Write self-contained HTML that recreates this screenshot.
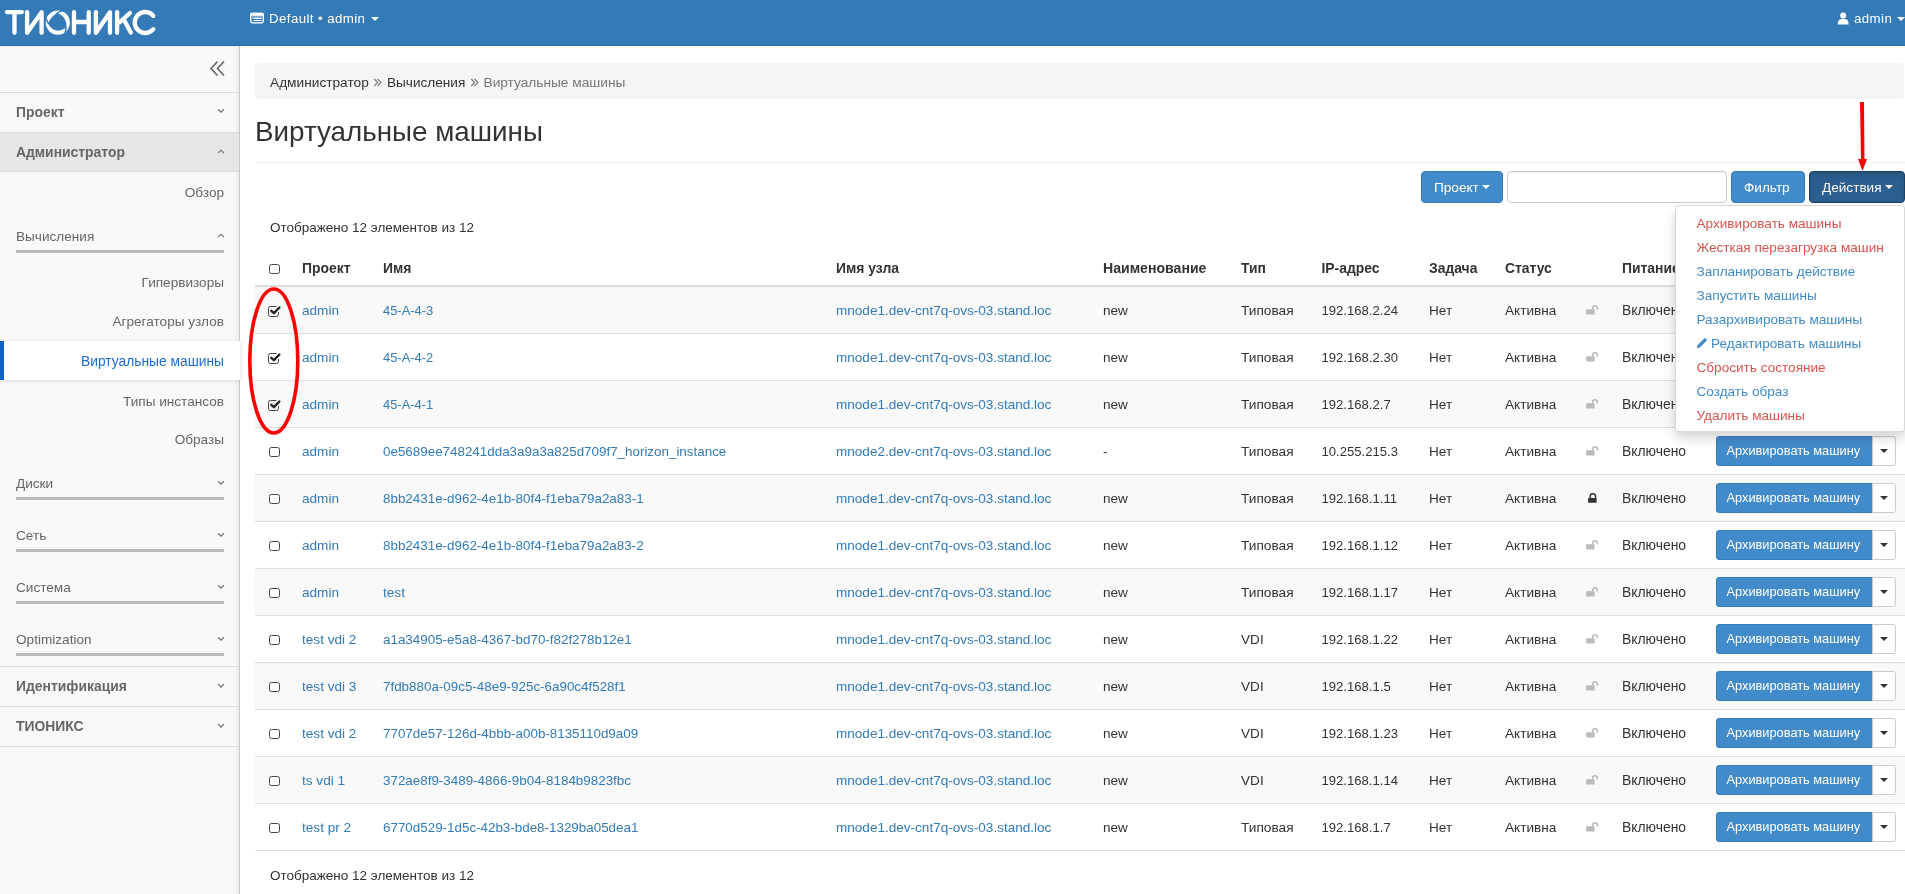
<!DOCTYPE html>
<html><head><meta charset="utf-8"><title>Виртуальные машины</title>
<style>
html,body{margin:0;padding:0;}
body{width:1905px;height:894px;overflow:hidden;position:relative;background:#fff;font-family:"Liberation Sans", sans-serif;}
#wrap{position:absolute;left:0;top:0;width:1905px;height:894px;will-change:transform;}
.t{position:absolute;white-space:nowrap;line-height:20px;}
</style></head><body><div id="wrap">
<div style="position:absolute;left:0px;top:0px;width:1905px;height:45px;background:#337ab7;"></div>
<div style="position:absolute;left:0px;top:45px;width:1905px;height:1px;background:#2e6da4;"></div>
<svg style="position:absolute;left:0;top:0" width="170" height="46" viewBox="0 0 170 46">
<g fill="none" stroke="#fff" stroke-width="4.3" stroke-linecap="round" stroke-linejoin="round">
<path d="M6.95 12.05 H21.85 M14.5 12.05 V32.75"/>
<path d="M27.1 12.2 V32.8 L41.6 12.2 V32.8"/>
<path d="M74 12.2 V32.8 M88.7 12.2 V32.8 M74 22 H88.7"/>
<path d="M95.9 12.2 V32.8 L110 12.2 V32.8"/>
<path d="M117.1 12.2 V32.8 M117.1 22.3 L119.5 22.3 L130 13 M123.8 19.5 L130.8 32.5"/>
<path d="M153.3 15.8 A10.5 10.5 0 1 0 153.3 29.2"/>
</g>
<circle cx="57.8" cy="22.6" r="12.1" fill="#fff"/>
<path d="M56.93 12.64 Q67.40 16.48 66.46 27.60 Q54.99 35.28 47.84 23.47 Q50.96 16.86 56.93 12.64 Z" fill="#337ab7"/>
<path d="M56.97 13.14 L62.18 10.57 M66.03 27.35 L65.14 33.09 M48.34 23.43 L45.77 18.22 " stroke="#337ab7" stroke-width="1.4" fill="none"/>
</svg>
<svg style="position:absolute;left:250px;top:12px" width="14" height="12" viewBox="0 0 14 12">
<rect x="0.6" y="1.3" width="12.8" height="9.6" rx="1.6" fill="rgba(255,255,255,0.35)" stroke="#fff" stroke-width="1.1"/>
<rect x="0.6" y="0.8" width="12.8" height="3" rx="1.2" fill="#fff"/>
<rect x="3.8" y="5.9" width="7.6" height="1.1" fill="#fff"/><rect x="3.8" y="7.9" width="7.6" height="1.1" fill="#fff"/>
<rect x="2" y="7" width="10" height="0.9" fill="#2f6fae"/><rect x="2" y="9" width="10" height="0.9" fill="#2f6fae"/>
</svg>
<div class="t" style="left:269px;top:9px;font-size:13.3px;font-weight:400;color:#fff;letter-spacing:0.4px">Default • admin</div>
<div style="position:absolute;left:370.5px;top:17px;width:0;height:0;border-left:4px solid transparent;border-right:4px solid transparent;border-top:4px solid #fff"></div>
<svg style="position:absolute;left:1837px;top:12px" width="13" height="13" viewBox="0 0 13 13">
<circle cx="6.2" cy="3.6" r="3" fill="#fff"/><path d="M0.8 12.5 C0.8 8 2.5 7 6.2 7 C9.9 7 11.6 8 11.6 12.5 Z" fill="#fff"/>
</svg>
<div class="t" style="left:1854px;top:9px;font-size:13.3px;font-weight:400;color:#fff;letter-spacing:0.4px">admin</div>
<div style="position:absolute;left:1897px;top:17px;width:0;height:0;border-left:4px solid transparent;border-right:4px solid transparent;border-top:4px solid #fff"></div>
<div style="position:absolute;left:0px;top:46px;width:239px;height:848px;background:#f9f9f9;"></div>
<div style="position:absolute;left:234px;top:46px;width:5px;height:848px;background:linear-gradient(to right, rgba(0,0,0,0), rgba(0,0,0,0.05));"></div>
<div style="position:absolute;left:239px;top:46px;width:1px;height:848px;background:#c8c8c8;"></div>
<svg style="position:absolute;left:209px;top:60px" width="17" height="17" viewBox="0 0 17 17">
<path d="M8.5 1.5 L2 8.5 L8.5 15.5 M15 1.5 L8.5 8.5 L15 15.5" fill="none" stroke="#666" stroke-width="1.6"/>
</svg>
<div style="position:absolute;left:0px;top:92px;width:239px;height:1px;background:#ddd;"></div>
<div style="position:absolute;left:0px;top:132px;width:239px;height:1px;background:#ddd;"></div>
<div style="position:absolute;left:0px;top:171px;width:239px;height:1px;background:#ddd;"></div>
<div style="position:absolute;left:0px;top:666px;width:239px;height:1px;background:#ddd;"></div>
<div style="position:absolute;left:0px;top:706px;width:239px;height:1px;background:#ddd;"></div>
<div style="position:absolute;left:0px;top:746px;width:239px;height:1px;background:#ddd;"></div>
<div style="position:absolute;left:0px;top:133px;width:239px;height:38px;background:#e6e6e6;"></div>
<div class="t" style="left:16px;top:102px;font-size:13.9px;font-weight:700;color:#666;">Проект</div>
<svg style="position:absolute;left:216.5px;top:108.3px" width="8" height="5.5" viewBox="0 0 8 5.5"><path d="M1 1.2 L4 4.2 L7 1.2" fill="none" stroke="#666" stroke-width="1.1"/></svg>
<div class="t" style="left:16px;top:142px;font-size:13.9px;font-weight:700;color:#666;">Администратор</div>
<svg style="position:absolute;left:216.5px;top:149.3px" width="8" height="5.5" viewBox="0 0 8 5.5"><path d="M1 4.2 L4 1.2 L7 4.2" fill="none" stroke="#666" stroke-width="1.1"/></svg>
<div class="t" style="right:1681px;top:183px;font-size:13.6px;font-weight:400;color:#666;">Обзор</div>
<div class="t" style="left:16px;top:227px;font-size:13.6px;font-weight:400;color:#666;">Вычисления</div>
<svg style="position:absolute;left:216.5px;top:233.3px" width="8" height="5.5" viewBox="0 0 8 5.5"><path d="M1 4.2 L4 1.2 L7 4.2" fill="none" stroke="#666" stroke-width="1.1"/></svg>
<div style="position:absolute;left:16px;top:250px;width:208px;height:3px;background:#bbb;"></div>
<div class="t" style="right:1681px;top:273px;font-size:13.6px;font-weight:400;color:#666;">Гипервизоры</div>
<div class="t" style="right:1681px;top:312px;font-size:13.6px;font-weight:400;color:#666;">Агрегаторы узлов</div>
<div style="position:absolute;left:0px;top:341px;width:240px;height:39px;background:#fff;box-shadow:0 1px 4px rgba(0,0,0,0.14);"></div>
<div style="position:absolute;left:0px;top:341px;width:4px;height:39px;background:#0b62c4;"></div>
<div class="t" style="right:1681px;top:352px;font-size:13.8px;font-weight:400;color:#1f6bcf;">Виртуальные машины</div>
<div class="t" style="right:1681px;top:392px;font-size:13.6px;font-weight:400;color:#666;">Типы инстансов</div>
<div class="t" style="right:1681px;top:430px;font-size:13.6px;font-weight:400;color:#666;">Образы</div>
<div class="t" style="left:16px;top:474px;font-size:13.6px;font-weight:400;color:#666;">Диски</div>
<svg style="position:absolute;left:216.5px;top:480.3px" width="8" height="5.5" viewBox="0 0 8 5.5"><path d="M1 1.2 L4 4.2 L7 1.2" fill="none" stroke="#666" stroke-width="1.1"/></svg>
<div style="position:absolute;left:16px;top:497px;width:208px;height:3px;background:#bbb;"></div>
<div class="t" style="left:16px;top:526px;font-size:13.6px;font-weight:400;color:#666;">Сеть</div>
<svg style="position:absolute;left:216.5px;top:532.3px" width="8" height="5.5" viewBox="0 0 8 5.5"><path d="M1 1.2 L4 4.2 L7 1.2" fill="none" stroke="#666" stroke-width="1.1"/></svg>
<div style="position:absolute;left:16px;top:549px;width:208px;height:3px;background:#bbb;"></div>
<div class="t" style="left:16px;top:578px;font-size:13.6px;font-weight:400;color:#666;">Система</div>
<svg style="position:absolute;left:216.5px;top:584.3px" width="8" height="5.5" viewBox="0 0 8 5.5"><path d="M1 1.2 L4 4.2 L7 1.2" fill="none" stroke="#666" stroke-width="1.1"/></svg>
<div style="position:absolute;left:16px;top:601px;width:208px;height:3px;background:#bbb;"></div>
<div class="t" style="left:16px;top:630px;font-size:13.6px;font-weight:400;color:#666;">Optimization</div>
<svg style="position:absolute;left:216.5px;top:636.3px" width="8" height="5.5" viewBox="0 0 8 5.5"><path d="M1 1.2 L4 4.2 L7 1.2" fill="none" stroke="#666" stroke-width="1.1"/></svg>
<div style="position:absolute;left:16px;top:653px;width:208px;height:3px;background:#bbb;"></div>
<div class="t" style="left:16px;top:676px;font-size:13.9px;font-weight:700;color:#666;">Идентификация</div>
<svg style="position:absolute;left:216.5px;top:683.3px" width="8" height="5.5" viewBox="0 0 8 5.5"><path d="M1 1.2 L4 4.2 L7 1.2" fill="none" stroke="#666" stroke-width="1.1"/></svg>
<div class="t" style="left:16px;top:716px;font-size:13.9px;font-weight:700;color:#666;">ТИОНИКС</div>
<svg style="position:absolute;left:216.5px;top:723.3px" width="8" height="5.5" viewBox="0 0 8 5.5"><path d="M1 1.2 L4 4.2 L7 1.2" fill="none" stroke="#666" stroke-width="1.1"/></svg>
<div style="position:absolute;left:255px;top:63px;width:1649px;height:36px;background:#f5f5f5;border-radius:4px;"></div>
<div class="t" style="left:270px;top:73px;font-size:13.7px;font-weight:400;color:#333;">Администратор</div>
<svg style="position:absolute;left:373px;top:78px" width="10" height="10" viewBox="0 0 10 10"><path d="M1.3 1 L4.6 4.5 L1.3 8 M4.6 1 L7.9 4.5 L4.6 8" fill="none" stroke="#777" stroke-width="1.1"/></svg>
<div class="t" style="left:387px;top:73px;font-size:13.6px;font-weight:400;color:#333;">Вычисления</div>
<svg style="position:absolute;left:469.5px;top:78px" width="10" height="10" viewBox="0 0 10 10"><path d="M1.3 1 L4.6 4.5 L1.3 8 M4.6 1 L7.9 4.5 L4.6 8" fill="none" stroke="#777" stroke-width="1.1"/></svg>
<div class="t" style="left:483.5px;top:73px;font-size:13.7px;font-weight:400;color:#777;">Виртуальные машины</div>
<div class="t" style="left:255px;top:122px;font-size:27.8px;font-weight:400;color:#333;">Виртуальные машины</div>
<div style="position:absolute;left:255px;top:162px;width:1650px;height:1px;background:#eee;"></div>
<div style="position:absolute;left:1421px;top:171px;width:82px;height:32px;background:#428bca;border:1px solid #357ebd;box-sizing:border-box;border-radius:4px;"></div>
<div class="t" style="left:1434px;top:178px;font-size:13.6px;font-weight:400;color:#fff;">Проект</div>
<div style="position:absolute;left:1482px;top:185px;width:0;height:0;border-left:4px solid transparent;border-right:4px solid transparent;border-top:4px solid #fff"></div>
<div style="position:absolute;left:1507px;top:171px;width:220px;height:32px;background:#fff;border:1px solid #ccc;box-sizing:border-box;border-radius:4px;box-shadow:inset 0 1px 1px rgba(0,0,0,.075);"></div>
<div style="position:absolute;left:1731px;top:171px;width:74px;height:32px;background:#428bca;border:1px solid #357ebd;box-sizing:border-box;border-radius:4px;"></div>
<div class="t" style="left:1744px;top:178px;font-size:13.6px;font-weight:400;color:#fff;">Фильтр</div>
<div style="position:absolute;left:1809px;top:171px;width:96px;height:32px;background:#2a5f8f;border:1px solid #1d4062;box-sizing:border-box;border-radius:4px;box-shadow:inset 0 3px 5px rgba(0,0,0,.125);"></div>
<div class="t" style="left:1822px;top:178px;font-size:13.6px;font-weight:400;color:#fff;">Действия</div>
<div style="position:absolute;left:1885px;top:185px;width:0;height:0;border-left:4px solid transparent;border-right:4px solid transparent;border-top:4px solid #fff"></div>
<div class="t" style="left:270px;top:218px;font-size:13.5px;font-weight:400;color:#333;">Отображено 12 элементов из 12</div>
<div style="position:absolute;left:269px;top:264px;width:11px;height:10px;border:1px solid #444;border-radius:2.5px;box-sizing:border-box;background:#fff"></div>
<div class="t" style="left:302px;top:258px;font-size:13.9px;font-weight:700;color:#333;">Проект</div>
<div class="t" style="left:383px;top:258px;font-size:13.9px;font-weight:700;color:#333;">Имя</div>
<div class="t" style="left:836px;top:258px;font-size:13.9px;font-weight:700;color:#333;">Имя узла</div>
<div class="t" style="left:1103px;top:258px;font-size:14.1px;font-weight:700;color:#333;">Наименование</div>
<div class="t" style="left:1241px;top:258px;font-size:13.9px;font-weight:700;color:#333;">Тип</div>
<div class="t" style="left:1321.5px;top:258px;font-size:13.9px;font-weight:700;color:#333;">IP-адрес</div>
<div class="t" style="left:1429px;top:258px;font-size:13.9px;font-weight:700;color:#333;">Задача</div>
<div class="t" style="left:1505px;top:258px;font-size:13.9px;font-weight:700;color:#333;">Статус</div>
<div class="t" style="left:1622px;top:258px;font-size:13.9px;font-weight:700;color:#333;">Питание</div>
<div style="position:absolute;left:255px;top:285px;width:1650px;height:2px;background:#ddd;"></div>
<div style="position:absolute;left:255px;top:287px;width:1650px;height:46px;background:#f9f9f9;"></div>
<div style="position:absolute;left:255px;top:333px;width:1650px;height:1px;background:#ddd;"></div>
<svg style="position:absolute;left:268px;top:304px" width="14" height="13" viewBox="0 0 14 13">
<path d="M8.5 2.5 H2.5 A2 2 0 0 0 0.5 4.5 V10.5 A2 2 0 0 0 2.5 12.5 H8.5 A2 2 0 0 0 10.5 10.5 V8" fill="none" stroke="#444" stroke-width="1"/>
<path d="M3.3 6.8 L5.9 9.2 L11.4 3.5" fill="none" stroke="#222" stroke-width="2.4" stroke-linecap="round" stroke-linejoin="round"/>
</svg>
<div class="t" style="left:302px;top:301px;font-size:13.6px;font-weight:400;color:#337ab7;">admin</div>
<div class="t" style="left:383px;top:301px;font-size:12.9px;font-weight:400;color:#337ab7;">45-A-4-3</div>
<div class="t" style="left:836px;top:301px;font-size:13.55px;font-weight:400;color:#337ab7;">mnode1.dev-cnt7q-ovs-03.stand.loc</div>
<div class="t" style="left:1103px;top:301px;font-size:13.6px;font-weight:400;color:#333;">new</div>
<div class="t" style="left:1241px;top:301px;font-size:13.7px;font-weight:400;color:#333;">Типовая</div>
<div class="t" style="left:1321.5px;top:301px;font-size:13.1px;font-weight:400;color:#333;">192.168.2.24</div>
<div class="t" style="left:1429px;top:301px;font-size:13.6px;font-weight:400;color:#333;">Нет</div>
<div class="t" style="left:1505px;top:301px;font-size:13.6px;font-weight:400;color:#333;">Активна</div>
<svg style="position:absolute;left:1586px;top:304px" width="14" height="12" viewBox="0 0 14 12"><path d="M6.65 5.6 V4 A2.35 2.35 0 0 1 11.35 4 V5.6" fill="none" stroke="#bbb" stroke-width="1.5"/><rect x="0.2" y="5.2" width="8.4" height="5.4" rx="0.6" fill="#bbb"/></svg>
<div class="t" style="left:1622px;top:300px;font-size:13.9px;font-weight:400;color:#333;">Включено</div>
<div style="position:absolute;left:1716px;top:295px;width:157px;height:30px;background:#428bca;border:1px solid #357ebd;box-sizing:border-box;border-radius:3px 0 0 3px;"></div>
<div class="t" style="left:1726.5px;top:300px;font-size:12.8px;font-weight:400;color:#fff;">Архивировать машину</div>
<div style="position:absolute;left:1872px;top:295px;width:24px;height:30px;background:#fff;border:1px solid #ccc;box-sizing:border-box;border-radius:0 3px 3px 0;"></div>
<div style="position:absolute;left:1880px;top:308px;width:0;height:0;border-left:4px solid transparent;border-right:4px solid transparent;border-top:4px solid #333"></div>
<div style="position:absolute;left:255px;top:380px;width:1650px;height:1px;background:#ddd;"></div>
<svg style="position:absolute;left:268px;top:351px" width="14" height="13" viewBox="0 0 14 13">
<path d="M8.5 2.5 H2.5 A2 2 0 0 0 0.5 4.5 V10.5 A2 2 0 0 0 2.5 12.5 H8.5 A2 2 0 0 0 10.5 10.5 V8" fill="none" stroke="#444" stroke-width="1"/>
<path d="M3.3 6.8 L5.9 9.2 L11.4 3.5" fill="none" stroke="#222" stroke-width="2.4" stroke-linecap="round" stroke-linejoin="round"/>
</svg>
<div class="t" style="left:302px;top:348px;font-size:13.6px;font-weight:400;color:#337ab7;">admin</div>
<div class="t" style="left:383px;top:348px;font-size:12.9px;font-weight:400;color:#337ab7;">45-A-4-2</div>
<div class="t" style="left:836px;top:348px;font-size:13.55px;font-weight:400;color:#337ab7;">mnode1.dev-cnt7q-ovs-03.stand.loc</div>
<div class="t" style="left:1103px;top:348px;font-size:13.6px;font-weight:400;color:#333;">new</div>
<div class="t" style="left:1241px;top:348px;font-size:13.7px;font-weight:400;color:#333;">Типовая</div>
<div class="t" style="left:1321.5px;top:348px;font-size:13.1px;font-weight:400;color:#333;">192.168.2.30</div>
<div class="t" style="left:1429px;top:348px;font-size:13.6px;font-weight:400;color:#333;">Нет</div>
<div class="t" style="left:1505px;top:348px;font-size:13.6px;font-weight:400;color:#333;">Активна</div>
<svg style="position:absolute;left:1586px;top:351px" width="14" height="12" viewBox="0 0 14 12"><path d="M6.65 5.6 V4 A2.35 2.35 0 0 1 11.35 4 V5.6" fill="none" stroke="#bbb" stroke-width="1.5"/><rect x="0.2" y="5.2" width="8.4" height="5.4" rx="0.6" fill="#bbb"/></svg>
<div class="t" style="left:1622px;top:347px;font-size:13.9px;font-weight:400;color:#333;">Включено</div>
<div style="position:absolute;left:1716px;top:342px;width:157px;height:30px;background:#428bca;border:1px solid #357ebd;box-sizing:border-box;border-radius:3px 0 0 3px;"></div>
<div class="t" style="left:1726.5px;top:347px;font-size:12.8px;font-weight:400;color:#fff;">Архивировать машину</div>
<div style="position:absolute;left:1872px;top:342px;width:24px;height:30px;background:#fff;border:1px solid #ccc;box-sizing:border-box;border-radius:0 3px 3px 0;"></div>
<div style="position:absolute;left:1880px;top:355px;width:0;height:0;border-left:4px solid transparent;border-right:4px solid transparent;border-top:4px solid #333"></div>
<div style="position:absolute;left:255px;top:381px;width:1650px;height:46px;background:#f9f9f9;"></div>
<div style="position:absolute;left:255px;top:427px;width:1650px;height:1px;background:#ddd;"></div>
<svg style="position:absolute;left:268px;top:398px" width="14" height="13" viewBox="0 0 14 13">
<path d="M8.5 2.5 H2.5 A2 2 0 0 0 0.5 4.5 V10.5 A2 2 0 0 0 2.5 12.5 H8.5 A2 2 0 0 0 10.5 10.5 V8" fill="none" stroke="#444" stroke-width="1"/>
<path d="M3.3 6.8 L5.9 9.2 L11.4 3.5" fill="none" stroke="#222" stroke-width="2.4" stroke-linecap="round" stroke-linejoin="round"/>
</svg>
<div class="t" style="left:302px;top:395px;font-size:13.6px;font-weight:400;color:#337ab7;">admin</div>
<div class="t" style="left:383px;top:395px;font-size:12.9px;font-weight:400;color:#337ab7;">45-A-4-1</div>
<div class="t" style="left:836px;top:395px;font-size:13.55px;font-weight:400;color:#337ab7;">mnode1.dev-cnt7q-ovs-03.stand.loc</div>
<div class="t" style="left:1103px;top:395px;font-size:13.6px;font-weight:400;color:#333;">new</div>
<div class="t" style="left:1241px;top:395px;font-size:13.7px;font-weight:400;color:#333;">Типовая</div>
<div class="t" style="left:1321.5px;top:395px;font-size:13.1px;font-weight:400;color:#333;">192.168.2.7</div>
<div class="t" style="left:1429px;top:395px;font-size:13.6px;font-weight:400;color:#333;">Нет</div>
<div class="t" style="left:1505px;top:395px;font-size:13.6px;font-weight:400;color:#333;">Активна</div>
<svg style="position:absolute;left:1586px;top:398px" width="14" height="12" viewBox="0 0 14 12"><path d="M6.65 5.6 V4 A2.35 2.35 0 0 1 11.35 4 V5.6" fill="none" stroke="#bbb" stroke-width="1.5"/><rect x="0.2" y="5.2" width="8.4" height="5.4" rx="0.6" fill="#bbb"/></svg>
<div class="t" style="left:1622px;top:394px;font-size:13.9px;font-weight:400;color:#333;">Включено</div>
<div style="position:absolute;left:1716px;top:389px;width:157px;height:30px;background:#428bca;border:1px solid #357ebd;box-sizing:border-box;border-radius:3px 0 0 3px;"></div>
<div class="t" style="left:1726.5px;top:394px;font-size:12.8px;font-weight:400;color:#fff;">Архивировать машину</div>
<div style="position:absolute;left:1872px;top:389px;width:24px;height:30px;background:#fff;border:1px solid #ccc;box-sizing:border-box;border-radius:0 3px 3px 0;"></div>
<div style="position:absolute;left:1880px;top:402px;width:0;height:0;border-left:4px solid transparent;border-right:4px solid transparent;border-top:4px solid #333"></div>
<div style="position:absolute;left:255px;top:474px;width:1650px;height:1px;background:#ddd;"></div>
<div style="position:absolute;left:269px;top:447px;width:11px;height:10px;border:1px solid #444;border-radius:2.5px;box-sizing:border-box;background:#fff"></div>
<div class="t" style="left:302px;top:442px;font-size:13.6px;font-weight:400;color:#337ab7;">admin</div>
<div class="t" style="left:383px;top:442px;font-size:13.4px;font-weight:400;color:#337ab7;">0e5689ee748241dda3a9a3a825d709f7_horizon_instance</div>
<div class="t" style="left:836px;top:442px;font-size:13.55px;font-weight:400;color:#337ab7;">mnode2.dev-cnt7q-ovs-03.stand.loc</div>
<div class="t" style="left:1103px;top:442px;font-size:13.6px;font-weight:400;color:#333;">-</div>
<div class="t" style="left:1241px;top:442px;font-size:13.7px;font-weight:400;color:#333;">Типовая</div>
<div class="t" style="left:1321.5px;top:442px;font-size:13.1px;font-weight:400;color:#333;">10.255.215.3</div>
<div class="t" style="left:1429px;top:442px;font-size:13.6px;font-weight:400;color:#333;">Нет</div>
<div class="t" style="left:1505px;top:442px;font-size:13.6px;font-weight:400;color:#333;">Активна</div>
<svg style="position:absolute;left:1586px;top:445px" width="14" height="12" viewBox="0 0 14 12"><path d="M6.65 5.6 V4 A2.35 2.35 0 0 1 11.35 4 V5.6" fill="none" stroke="#bbb" stroke-width="1.5"/><rect x="0.2" y="5.2" width="8.4" height="5.4" rx="0.6" fill="#bbb"/></svg>
<div class="t" style="left:1622px;top:441px;font-size:13.9px;font-weight:400;color:#333;">Включено</div>
<div style="position:absolute;left:1716px;top:436px;width:157px;height:30px;background:#428bca;border:1px solid #357ebd;box-sizing:border-box;border-radius:3px 0 0 3px;"></div>
<div class="t" style="left:1726.5px;top:441px;font-size:12.8px;font-weight:400;color:#fff;">Архивировать машину</div>
<div style="position:absolute;left:1872px;top:436px;width:24px;height:30px;background:#fff;border:1px solid #ccc;box-sizing:border-box;border-radius:0 3px 3px 0;"></div>
<div style="position:absolute;left:1880px;top:449px;width:0;height:0;border-left:4px solid transparent;border-right:4px solid transparent;border-top:4px solid #333"></div>
<div style="position:absolute;left:255px;top:475px;width:1650px;height:46px;background:#f9f9f9;"></div>
<div style="position:absolute;left:255px;top:521px;width:1650px;height:1px;background:#ddd;"></div>
<div style="position:absolute;left:269px;top:494px;width:11px;height:10px;border:1px solid #444;border-radius:2.5px;box-sizing:border-box;background:#fff"></div>
<div class="t" style="left:302px;top:489px;font-size:13.6px;font-weight:400;color:#337ab7;">admin</div>
<div class="t" style="left:383px;top:489px;font-size:13.4px;font-weight:400;color:#337ab7;">8bb2431e-d962-4e1b-80f4-f1eba79a2a83-1</div>
<div class="t" style="left:836px;top:489px;font-size:13.55px;font-weight:400;color:#337ab7;">mnode1.dev-cnt7q-ovs-03.stand.loc</div>
<div class="t" style="left:1103px;top:489px;font-size:13.6px;font-weight:400;color:#333;">new</div>
<div class="t" style="left:1241px;top:489px;font-size:13.7px;font-weight:400;color:#333;">Типовая</div>
<div class="t" style="left:1321.5px;top:489px;font-size:13.1px;font-weight:400;color:#333;">192.168.1.11</div>
<div class="t" style="left:1429px;top:489px;font-size:13.6px;font-weight:400;color:#333;">Нет</div>
<div class="t" style="left:1505px;top:489px;font-size:13.6px;font-weight:400;color:#333;">Активна</div>
<svg style="position:absolute;left:1587px;top:492px" width="12" height="12" viewBox="0 0 12 12"><path d="M3.2 6.2 V4.3 A2.65 2.65 0 0 1 8.5 4.3 V6.2" fill="none" stroke="#333" stroke-width="1.5"/><rect x="1.1" y="5.9" width="8.5" height="4.9" rx="0.6" fill="#333"/></svg>
<div class="t" style="left:1622px;top:488px;font-size:13.9px;font-weight:400;color:#333;">Включено</div>
<div style="position:absolute;left:1716px;top:483px;width:157px;height:30px;background:#428bca;border:1px solid #357ebd;box-sizing:border-box;border-radius:3px 0 0 3px;"></div>
<div class="t" style="left:1726.5px;top:488px;font-size:12.8px;font-weight:400;color:#fff;">Архивировать машину</div>
<div style="position:absolute;left:1872px;top:483px;width:24px;height:30px;background:#fff;border:1px solid #ccc;box-sizing:border-box;border-radius:0 3px 3px 0;"></div>
<div style="position:absolute;left:1880px;top:496px;width:0;height:0;border-left:4px solid transparent;border-right:4px solid transparent;border-top:4px solid #333"></div>
<div style="position:absolute;left:255px;top:568px;width:1650px;height:1px;background:#ddd;"></div>
<div style="position:absolute;left:269px;top:541px;width:11px;height:10px;border:1px solid #444;border-radius:2.5px;box-sizing:border-box;background:#fff"></div>
<div class="t" style="left:302px;top:536px;font-size:13.6px;font-weight:400;color:#337ab7;">admin</div>
<div class="t" style="left:383px;top:536px;font-size:13.4px;font-weight:400;color:#337ab7;">8bb2431e-d962-4e1b-80f4-f1eba79a2a83-2</div>
<div class="t" style="left:836px;top:536px;font-size:13.55px;font-weight:400;color:#337ab7;">mnode1.dev-cnt7q-ovs-03.stand.loc</div>
<div class="t" style="left:1103px;top:536px;font-size:13.6px;font-weight:400;color:#333;">new</div>
<div class="t" style="left:1241px;top:536px;font-size:13.7px;font-weight:400;color:#333;">Типовая</div>
<div class="t" style="left:1321.5px;top:536px;font-size:13.1px;font-weight:400;color:#333;">192.168.1.12</div>
<div class="t" style="left:1429px;top:536px;font-size:13.6px;font-weight:400;color:#333;">Нет</div>
<div class="t" style="left:1505px;top:536px;font-size:13.6px;font-weight:400;color:#333;">Активна</div>
<svg style="position:absolute;left:1586px;top:539px" width="14" height="12" viewBox="0 0 14 12"><path d="M6.65 5.6 V4 A2.35 2.35 0 0 1 11.35 4 V5.6" fill="none" stroke="#bbb" stroke-width="1.5"/><rect x="0.2" y="5.2" width="8.4" height="5.4" rx="0.6" fill="#bbb"/></svg>
<div class="t" style="left:1622px;top:535px;font-size:13.9px;font-weight:400;color:#333;">Включено</div>
<div style="position:absolute;left:1716px;top:530px;width:157px;height:30px;background:#428bca;border:1px solid #357ebd;box-sizing:border-box;border-radius:3px 0 0 3px;"></div>
<div class="t" style="left:1726.5px;top:535px;font-size:12.8px;font-weight:400;color:#fff;">Архивировать машину</div>
<div style="position:absolute;left:1872px;top:530px;width:24px;height:30px;background:#fff;border:1px solid #ccc;box-sizing:border-box;border-radius:0 3px 3px 0;"></div>
<div style="position:absolute;left:1880px;top:543px;width:0;height:0;border-left:4px solid transparent;border-right:4px solid transparent;border-top:4px solid #333"></div>
<div style="position:absolute;left:255px;top:569px;width:1650px;height:46px;background:#f9f9f9;"></div>
<div style="position:absolute;left:255px;top:615px;width:1650px;height:1px;background:#ddd;"></div>
<div style="position:absolute;left:269px;top:588px;width:11px;height:10px;border:1px solid #444;border-radius:2.5px;box-sizing:border-box;background:#fff"></div>
<div class="t" style="left:302px;top:583px;font-size:13.6px;font-weight:400;color:#337ab7;">admin</div>
<div class="t" style="left:383px;top:583px;font-size:13.6px;font-weight:400;color:#337ab7;">test</div>
<div class="t" style="left:836px;top:583px;font-size:13.55px;font-weight:400;color:#337ab7;">mnode1.dev-cnt7q-ovs-03.stand.loc</div>
<div class="t" style="left:1103px;top:583px;font-size:13.6px;font-weight:400;color:#333;">new</div>
<div class="t" style="left:1241px;top:583px;font-size:13.7px;font-weight:400;color:#333;">Типовая</div>
<div class="t" style="left:1321.5px;top:583px;font-size:13.1px;font-weight:400;color:#333;">192.168.1.17</div>
<div class="t" style="left:1429px;top:583px;font-size:13.6px;font-weight:400;color:#333;">Нет</div>
<div class="t" style="left:1505px;top:583px;font-size:13.6px;font-weight:400;color:#333;">Активна</div>
<svg style="position:absolute;left:1586px;top:586px" width="14" height="12" viewBox="0 0 14 12"><path d="M6.65 5.6 V4 A2.35 2.35 0 0 1 11.35 4 V5.6" fill="none" stroke="#bbb" stroke-width="1.5"/><rect x="0.2" y="5.2" width="8.4" height="5.4" rx="0.6" fill="#bbb"/></svg>
<div class="t" style="left:1622px;top:582px;font-size:13.9px;font-weight:400;color:#333;">Включено</div>
<div style="position:absolute;left:1716px;top:577px;width:157px;height:30px;background:#428bca;border:1px solid #357ebd;box-sizing:border-box;border-radius:3px 0 0 3px;"></div>
<div class="t" style="left:1726.5px;top:582px;font-size:12.8px;font-weight:400;color:#fff;">Архивировать машину</div>
<div style="position:absolute;left:1872px;top:577px;width:24px;height:30px;background:#fff;border:1px solid #ccc;box-sizing:border-box;border-radius:0 3px 3px 0;"></div>
<div style="position:absolute;left:1880px;top:590px;width:0;height:0;border-left:4px solid transparent;border-right:4px solid transparent;border-top:4px solid #333"></div>
<div style="position:absolute;left:255px;top:662px;width:1650px;height:1px;background:#ddd;"></div>
<div style="position:absolute;left:269px;top:635px;width:11px;height:10px;border:1px solid #444;border-radius:2.5px;box-sizing:border-box;background:#fff"></div>
<div class="t" style="left:302px;top:630px;font-size:13.6px;font-weight:400;color:#337ab7;">test vdi 2</div>
<div class="t" style="left:383px;top:630px;font-size:13.4px;font-weight:400;color:#337ab7;">a1a34905-e5a8-4367-bd70-f82f278b12e1</div>
<div class="t" style="left:836px;top:630px;font-size:13.55px;font-weight:400;color:#337ab7;">mnode1.dev-cnt7q-ovs-03.stand.loc</div>
<div class="t" style="left:1103px;top:630px;font-size:13.6px;font-weight:400;color:#333;">new</div>
<div class="t" style="left:1241px;top:630px;font-size:13.6px;font-weight:400;color:#333;">VDI</div>
<div class="t" style="left:1321.5px;top:630px;font-size:13.1px;font-weight:400;color:#333;">192.168.1.22</div>
<div class="t" style="left:1429px;top:630px;font-size:13.6px;font-weight:400;color:#333;">Нет</div>
<div class="t" style="left:1505px;top:630px;font-size:13.6px;font-weight:400;color:#333;">Активна</div>
<svg style="position:absolute;left:1586px;top:633px" width="14" height="12" viewBox="0 0 14 12"><path d="M6.65 5.6 V4 A2.35 2.35 0 0 1 11.35 4 V5.6" fill="none" stroke="#bbb" stroke-width="1.5"/><rect x="0.2" y="5.2" width="8.4" height="5.4" rx="0.6" fill="#bbb"/></svg>
<div class="t" style="left:1622px;top:629px;font-size:13.9px;font-weight:400;color:#333;">Включено</div>
<div style="position:absolute;left:1716px;top:624px;width:157px;height:30px;background:#428bca;border:1px solid #357ebd;box-sizing:border-box;border-radius:3px 0 0 3px;"></div>
<div class="t" style="left:1726.5px;top:629px;font-size:12.8px;font-weight:400;color:#fff;">Архивировать машину</div>
<div style="position:absolute;left:1872px;top:624px;width:24px;height:30px;background:#fff;border:1px solid #ccc;box-sizing:border-box;border-radius:0 3px 3px 0;"></div>
<div style="position:absolute;left:1880px;top:637px;width:0;height:0;border-left:4px solid transparent;border-right:4px solid transparent;border-top:4px solid #333"></div>
<div style="position:absolute;left:255px;top:663px;width:1650px;height:46px;background:#f9f9f9;"></div>
<div style="position:absolute;left:255px;top:709px;width:1650px;height:1px;background:#ddd;"></div>
<div style="position:absolute;left:269px;top:682px;width:11px;height:10px;border:1px solid #444;border-radius:2.5px;box-sizing:border-box;background:#fff"></div>
<div class="t" style="left:302px;top:677px;font-size:13.6px;font-weight:400;color:#337ab7;">test vdi 3</div>
<div class="t" style="left:383px;top:677px;font-size:13.4px;font-weight:400;color:#337ab7;">7fdb880a-09c5-48e9-925c-6a90c4f528f1</div>
<div class="t" style="left:836px;top:677px;font-size:13.55px;font-weight:400;color:#337ab7;">mnode1.dev-cnt7q-ovs-03.stand.loc</div>
<div class="t" style="left:1103px;top:677px;font-size:13.6px;font-weight:400;color:#333;">new</div>
<div class="t" style="left:1241px;top:677px;font-size:13.6px;font-weight:400;color:#333;">VDI</div>
<div class="t" style="left:1321.5px;top:677px;font-size:13.1px;font-weight:400;color:#333;">192.168.1.5</div>
<div class="t" style="left:1429px;top:677px;font-size:13.6px;font-weight:400;color:#333;">Нет</div>
<div class="t" style="left:1505px;top:677px;font-size:13.6px;font-weight:400;color:#333;">Активна</div>
<svg style="position:absolute;left:1586px;top:680px" width="14" height="12" viewBox="0 0 14 12"><path d="M6.65 5.6 V4 A2.35 2.35 0 0 1 11.35 4 V5.6" fill="none" stroke="#bbb" stroke-width="1.5"/><rect x="0.2" y="5.2" width="8.4" height="5.4" rx="0.6" fill="#bbb"/></svg>
<div class="t" style="left:1622px;top:676px;font-size:13.9px;font-weight:400;color:#333;">Включено</div>
<div style="position:absolute;left:1716px;top:671px;width:157px;height:30px;background:#428bca;border:1px solid #357ebd;box-sizing:border-box;border-radius:3px 0 0 3px;"></div>
<div class="t" style="left:1726.5px;top:676px;font-size:12.8px;font-weight:400;color:#fff;">Архивировать машину</div>
<div style="position:absolute;left:1872px;top:671px;width:24px;height:30px;background:#fff;border:1px solid #ccc;box-sizing:border-box;border-radius:0 3px 3px 0;"></div>
<div style="position:absolute;left:1880px;top:684px;width:0;height:0;border-left:4px solid transparent;border-right:4px solid transparent;border-top:4px solid #333"></div>
<div style="position:absolute;left:255px;top:756px;width:1650px;height:1px;background:#ddd;"></div>
<div style="position:absolute;left:269px;top:729px;width:11px;height:10px;border:1px solid #444;border-radius:2.5px;box-sizing:border-box;background:#fff"></div>
<div class="t" style="left:302px;top:724px;font-size:13.6px;font-weight:400;color:#337ab7;">test vdi 2</div>
<div class="t" style="left:383px;top:724px;font-size:13.4px;font-weight:400;color:#337ab7;">7707de57-126d-4bbb-a00b-8135110d9a09</div>
<div class="t" style="left:836px;top:724px;font-size:13.55px;font-weight:400;color:#337ab7;">mnode1.dev-cnt7q-ovs-03.stand.loc</div>
<div class="t" style="left:1103px;top:724px;font-size:13.6px;font-weight:400;color:#333;">new</div>
<div class="t" style="left:1241px;top:724px;font-size:13.6px;font-weight:400;color:#333;">VDI</div>
<div class="t" style="left:1321.5px;top:724px;font-size:13.1px;font-weight:400;color:#333;">192.168.1.23</div>
<div class="t" style="left:1429px;top:724px;font-size:13.6px;font-weight:400;color:#333;">Нет</div>
<div class="t" style="left:1505px;top:724px;font-size:13.6px;font-weight:400;color:#333;">Активна</div>
<svg style="position:absolute;left:1586px;top:727px" width="14" height="12" viewBox="0 0 14 12"><path d="M6.65 5.6 V4 A2.35 2.35 0 0 1 11.35 4 V5.6" fill="none" stroke="#bbb" stroke-width="1.5"/><rect x="0.2" y="5.2" width="8.4" height="5.4" rx="0.6" fill="#bbb"/></svg>
<div class="t" style="left:1622px;top:723px;font-size:13.9px;font-weight:400;color:#333;">Включено</div>
<div style="position:absolute;left:1716px;top:718px;width:157px;height:30px;background:#428bca;border:1px solid #357ebd;box-sizing:border-box;border-radius:3px 0 0 3px;"></div>
<div class="t" style="left:1726.5px;top:723px;font-size:12.8px;font-weight:400;color:#fff;">Архивировать машину</div>
<div style="position:absolute;left:1872px;top:718px;width:24px;height:30px;background:#fff;border:1px solid #ccc;box-sizing:border-box;border-radius:0 3px 3px 0;"></div>
<div style="position:absolute;left:1880px;top:731px;width:0;height:0;border-left:4px solid transparent;border-right:4px solid transparent;border-top:4px solid #333"></div>
<div style="position:absolute;left:255px;top:757px;width:1650px;height:46px;background:#f9f9f9;"></div>
<div style="position:absolute;left:255px;top:803px;width:1650px;height:1px;background:#ddd;"></div>
<div style="position:absolute;left:269px;top:776px;width:11px;height:10px;border:1px solid #444;border-radius:2.5px;box-sizing:border-box;background:#fff"></div>
<div class="t" style="left:302px;top:771px;font-size:13.6px;font-weight:400;color:#337ab7;">ts vdi 1</div>
<div class="t" style="left:383px;top:771px;font-size:13.4px;font-weight:400;color:#337ab7;">372ae8f9-3489-4866-9b04-8184b9823fbc</div>
<div class="t" style="left:836px;top:771px;font-size:13.55px;font-weight:400;color:#337ab7;">mnode1.dev-cnt7q-ovs-03.stand.loc</div>
<div class="t" style="left:1103px;top:771px;font-size:13.6px;font-weight:400;color:#333;">new</div>
<div class="t" style="left:1241px;top:771px;font-size:13.6px;font-weight:400;color:#333;">VDI</div>
<div class="t" style="left:1321.5px;top:771px;font-size:13.1px;font-weight:400;color:#333;">192.168.1.14</div>
<div class="t" style="left:1429px;top:771px;font-size:13.6px;font-weight:400;color:#333;">Нет</div>
<div class="t" style="left:1505px;top:771px;font-size:13.6px;font-weight:400;color:#333;">Активна</div>
<svg style="position:absolute;left:1586px;top:774px" width="14" height="12" viewBox="0 0 14 12"><path d="M6.65 5.6 V4 A2.35 2.35 0 0 1 11.35 4 V5.6" fill="none" stroke="#bbb" stroke-width="1.5"/><rect x="0.2" y="5.2" width="8.4" height="5.4" rx="0.6" fill="#bbb"/></svg>
<div class="t" style="left:1622px;top:770px;font-size:13.9px;font-weight:400;color:#333;">Включено</div>
<div style="position:absolute;left:1716px;top:765px;width:157px;height:30px;background:#428bca;border:1px solid #357ebd;box-sizing:border-box;border-radius:3px 0 0 3px;"></div>
<div class="t" style="left:1726.5px;top:770px;font-size:12.8px;font-weight:400;color:#fff;">Архивировать машину</div>
<div style="position:absolute;left:1872px;top:765px;width:24px;height:30px;background:#fff;border:1px solid #ccc;box-sizing:border-box;border-radius:0 3px 3px 0;"></div>
<div style="position:absolute;left:1880px;top:778px;width:0;height:0;border-left:4px solid transparent;border-right:4px solid transparent;border-top:4px solid #333"></div>
<div style="position:absolute;left:255px;top:850px;width:1650px;height:1px;background:#ddd;"></div>
<div style="position:absolute;left:269px;top:823px;width:11px;height:10px;border:1px solid #444;border-radius:2.5px;box-sizing:border-box;background:#fff"></div>
<div class="t" style="left:302px;top:818px;font-size:13.6px;font-weight:400;color:#337ab7;">test pr 2</div>
<div class="t" style="left:383px;top:818px;font-size:13.4px;font-weight:400;color:#337ab7;">6770d529-1d5c-42b3-bde8-1329ba05dea1</div>
<div class="t" style="left:836px;top:818px;font-size:13.55px;font-weight:400;color:#337ab7;">mnode1.dev-cnt7q-ovs-03.stand.loc</div>
<div class="t" style="left:1103px;top:818px;font-size:13.6px;font-weight:400;color:#333;">new</div>
<div class="t" style="left:1241px;top:818px;font-size:13.7px;font-weight:400;color:#333;">Типовая</div>
<div class="t" style="left:1321.5px;top:818px;font-size:13.1px;font-weight:400;color:#333;">192.168.1.7</div>
<div class="t" style="left:1429px;top:818px;font-size:13.6px;font-weight:400;color:#333;">Нет</div>
<div class="t" style="left:1505px;top:818px;font-size:13.6px;font-weight:400;color:#333;">Активна</div>
<svg style="position:absolute;left:1586px;top:821px" width="14" height="12" viewBox="0 0 14 12"><path d="M6.65 5.6 V4 A2.35 2.35 0 0 1 11.35 4 V5.6" fill="none" stroke="#bbb" stroke-width="1.5"/><rect x="0.2" y="5.2" width="8.4" height="5.4" rx="0.6" fill="#bbb"/></svg>
<div class="t" style="left:1622px;top:817px;font-size:13.9px;font-weight:400;color:#333;">Включено</div>
<div style="position:absolute;left:1716px;top:812px;width:157px;height:30px;background:#428bca;border:1px solid #357ebd;box-sizing:border-box;border-radius:3px 0 0 3px;"></div>
<div class="t" style="left:1726.5px;top:817px;font-size:12.8px;font-weight:400;color:#fff;">Архивировать машину</div>
<div style="position:absolute;left:1872px;top:812px;width:24px;height:30px;background:#fff;border:1px solid #ccc;box-sizing:border-box;border-radius:0 3px 3px 0;"></div>
<div style="position:absolute;left:1880px;top:825px;width:0;height:0;border-left:4px solid transparent;border-right:4px solid transparent;border-top:4px solid #333"></div>
<div class="t" style="left:270px;top:866px;font-size:13.5px;font-weight:400;color:#333;">Отображено 12 элементов из 12</div>
<div style="position:absolute;left:1675px;top:205px;width:230px;height:227px;background:#fff;border:1px solid rgba(0,0,0,.15);box-sizing:border-box;border-radius:4px;box-shadow:0 6px 12px rgba(0,0,0,.175);"></div>
<div class="t" style="left:1696.5px;top:214px;font-size:13.6px;font-weight:400;color:#d9534f;">Архивировать машины</div>
<div class="t" style="left:1696.5px;top:238px;font-size:13.6px;font-weight:400;color:#d9534f;">Жесткая перезагрузка машин</div>
<div class="t" style="left:1696.5px;top:262px;font-size:13.6px;font-weight:400;color:#428bca;">Запланировать действие</div>
<div class="t" style="left:1696.5px;top:286px;font-size:13.6px;font-weight:400;color:#428bca;">Запустить машины</div>
<div class="t" style="left:1696.5px;top:310px;font-size:13.6px;font-weight:400;color:#428bca;">Разархивировать машины</div>
<svg style="position:absolute;left:1696px;top:337px" width="12" height="12" viewBox="0 0 12 12"><path d="M0.8 11.2 L1.4 8.2 L8.2 1.4 Q8.9 0.7 9.6 1.4 L10.6 2.4 Q11.3 3.1 10.6 3.8 L3.8 10.6 Z" fill="#428bca"/></svg>
<div class="t" style="left:1711px;top:334px;font-size:13.6px;font-weight:400;color:#428bca;">Редактировать машины</div>
<div class="t" style="left:1696.5px;top:358px;font-size:13.6px;font-weight:400;color:#d9534f;">Сбросить состояние</div>
<div class="t" style="left:1696.5px;top:382px;font-size:13.6px;font-weight:400;color:#428bca;">Создать образ</div>
<div class="t" style="left:1696.5px;top:406px;font-size:13.6px;font-weight:400;color:#d9534f;">Удалить машины</div>
<svg style="position:absolute;left:0;top:0" width="1905" height="894" viewBox="0 0 1905 894">
<ellipse cx="273.8" cy="361" rx="24" ry="72" fill="none" stroke="#f00" stroke-width="3.6"/>
<path d="M1860 102 L1864 102 L1864.5 159 L1867 159 L1862.5 171 L1858 159 L1861 159 Z" fill="#f00"/>
</svg>
</div></body></html>
